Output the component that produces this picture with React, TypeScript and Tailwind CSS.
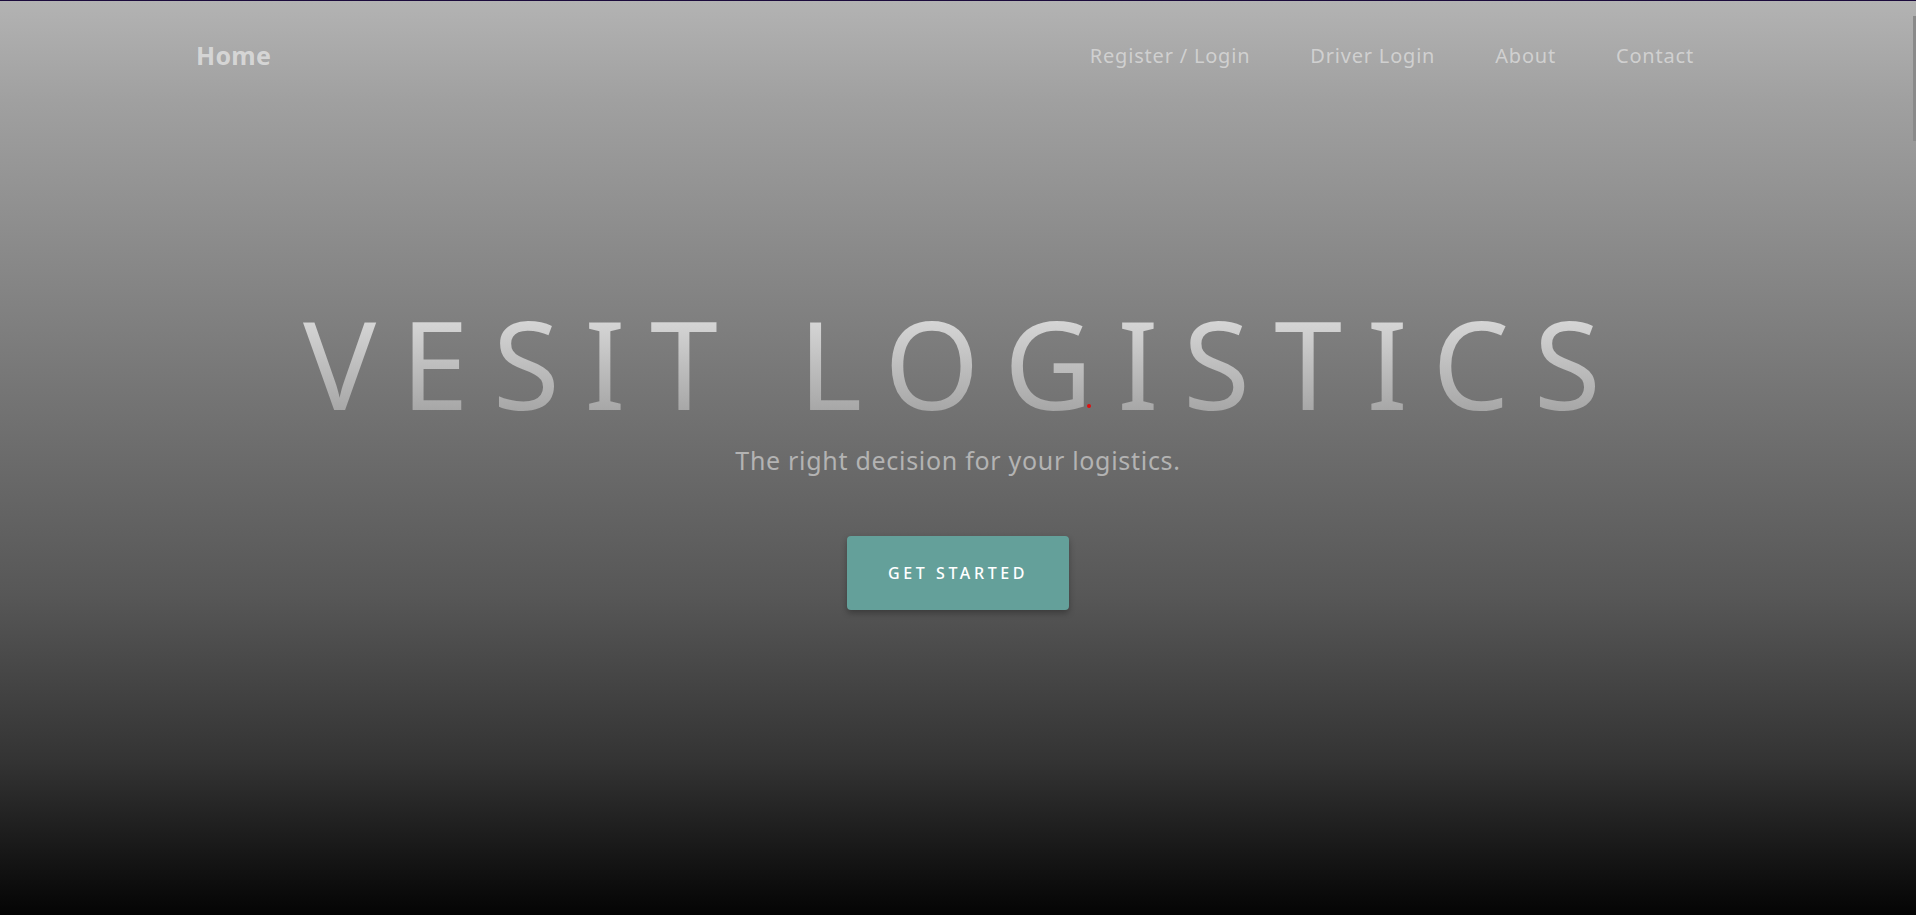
import React from "react";

export default function App() {
  return (
    <div
      className="relative h-[915px] w-full overflow-hidden bg-[linear-gradient(to_bottom,#b3b3b3_0%,#a0a0a0_11%,#575757_65%,#343434_83%,#040404_100%)]"
      style={{ fontFamily: '"Noto Sans", "Open Sans", sans-serif' }}
    >
      <div className="h-px w-full bg-[#1b0a3c]" />
      <nav className="flex items-center justify-between pl-[196px] pr-[222px] pt-[36px]">
        <a className="text-[25px] font-bold tracking-[0.3px] text-[#dcdcdc]/90">Home</a>
        <ul className="flex items-center gap-[60px] text-[20px] tracking-[0.8px] text-[#d6d6d6]/90">
          <li>Register / Login</li>
          <li>Driver Login</li>
          <li>About</li>
          <li>Contact</li>
        </ul>
      </nav>
      <main className="flex flex-col items-center pt-[205px]">
        <h1 className="bg-gradient-to-b from-[#ececec] to-[#959595] bg-clip-text pl-[0.1em] text-[122px] font-normal leading-[1.362] tracking-[0.2em] text-transparent">
          VESIT LOGISTICS
        </h1>
        <p className="-mt-[3px] text-[25px] leading-[1.362] tracking-[0.7px] text-[#b3b3b3]">
          The right decision for your logistics.
        </p>
        <button className="mt-[59px] h-[74px] w-[222px] rounded-[4px] bg-[#64a09a] text-[16px] font-medium tracking-[3.6px] text-white shadow-[0_3px_6px_rgba(0,0,0,0.3)]">
          GET STARTED
        </button>
      </main>
      <div className="absolute left-[1087px] top-[404px] h-[4px] w-[4px] rounded-full bg-[#e01010]" />
      <div className="absolute right-0 top-[16px] h-[125px] w-[3px] bg-[#8a8a8a]" />
    </div>
  );
}
